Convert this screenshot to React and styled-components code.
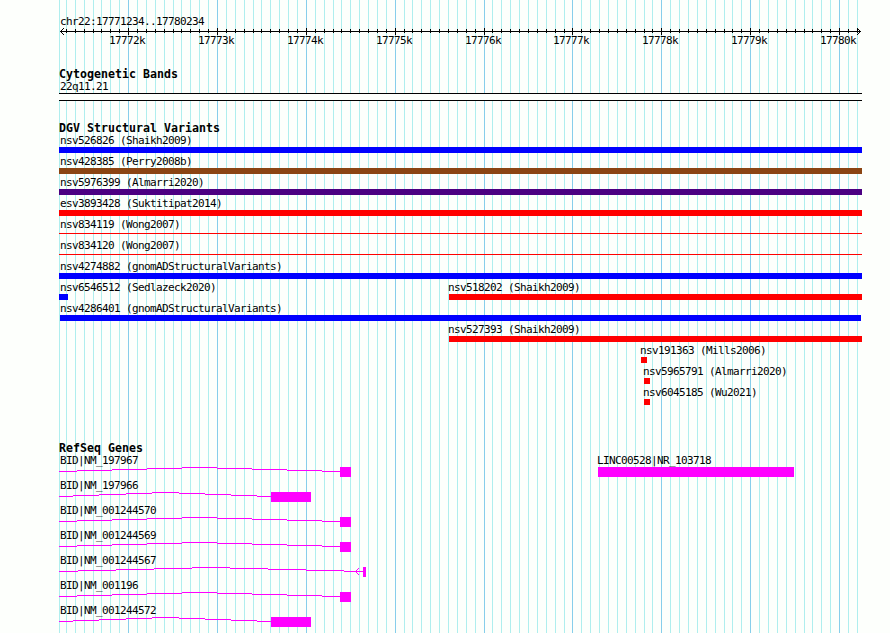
import styled, { createGlobalStyle, css } from "styled-components";

const GlobalStyle = createGlobalStyle`
  body {
    margin: 0;
    background: #fdfffc;
    overflow: hidden;
  }
`;

const Page = styled.main`
  position: relative;
  width: 890px;
  height: 633px;
  overflow: hidden;
  color: #000;
  background: #fdfffc;
`;

const GridLines = styled.svg`
  position: absolute;
  top: 0;
  left: 0;
  shape-rendering: crispEdges;
`;

const Content = styled.div`
  position: relative;
  width: 803px;
  margin-left: 59px;
`;

const labelFont = css`
  font-family: "DejaVu Sans Mono", monospace;
  font-size: 11px;
  letter-spacing: -0.622px;
  white-space: pre;
`;

const Ruler = styled.svg`
  display: block;
  overflow: visible;
  shape-rendering: crispEdges;

  text {
    ${labelFont}
  }
`;

const Track = styled.section`
  height: ${(p) => p.$height}px;
`;

const TrackTitle = styled.h2`
  height: 12px;
  margin: 0;
  font-family: "DejaVu Sans Mono", monospace;
  font-size: 11.6px;
  font-weight: bold;
  letter-spacing: 0.017px;
  line-height: 16px;
  white-space: pre;
`;

const Band = styled.div`
  height: 6px;
  border-top: 1px solid #000;
  border-bottom: 1px solid #000;
  background: #fdfffc;
`;

const Row = styled.div`
  display: grid;
  height: ${(p) => p.$height}px;
`;

const Feature = styled.div`
  grid-area: 1 / 1;
  margin-left: ${(p) => p.$start}px;
`;

const Label = styled.div`
  height: 15px;
  ${labelFont}
  line-height: 17px;
  text-indent: ${(p) => p.$indent}px;
`;

const Bar = styled.div`
  width: ${(p) => p.$width}px;
  height: ${(p) => (p.$thin ? 1 : 6)}px;
  margin-top: ${(p) => (p.$thin ? 2 : 0)}px;
  background: ${(p) => p.$color};
`;

const Transcript = styled.svg`
  display: block;
  fill: #ff00ff;
  shape-rendering: crispEdges;
`;

const START = 17771234;
const LEFT = 60;
const SCALE = 800 / 9001;
const toX = (bp) => Math.round(LEFT + (bp - START) * SCALE);

// labels never start left of the first base, otherwise just before their bar
const labelIndent = (x) => (x < 2 ? 1 - x : -1);

const ticks = [];
for (let bp = 17771300; bp <= 17780200; bp += 100) {
  ticks.push({ bp, x: toX(bp), major: bp % 1000 === 0 });
}

const BLUE = "#0000ff";
const RED = "#ff0000";

const variants = [
  [{ name: "nsv526826 (Shaikh2009)", x: 0, w: 803, color: BLUE }],
  [{ name: "nsv428385 (Perry2008b)", x: 0, w: 803, color: "#8b4513" }],
  [{ name: "nsv5976399 (Almarri2020)", x: 0, w: 803, color: "#4b0082" }],
  [{ name: "esv3893428 (Suktitipat2014)", x: 0, w: 803, color: RED }],
  [{ name: "nsv834119 (Wong2007)", x: 0, w: 803, color: RED, thin: true }],
  [{ name: "nsv834120 (Wong2007)", x: 0, w: 803, color: RED, thin: true }],
  [{ name: "nsv4274882 (gnomADStructuralVariants)", x: 0, w: 803, color: BLUE }],
  [
    { name: "nsv6546512 (Sedlazeck2020)", x: 0, w: 9, color: BLUE },
    { name: "nsv518202 (Shaikh2009)", x: 390, w: 413, color: RED },
  ],
  [{ name: "nsv4286401 (gnomADStructuralVariants)", x: 1, w: 801, color: BLUE }],
  [{ name: "nsv527393 (Shaikh2009)", x: 390, w: 413, color: RED }],
  [{ name: "nsv191363 (Mills2006)", x: 582, w: 6, color: RED }],
  [{ name: "nsv5965791 (Almarri2020)", x: 585, w: 6, color: RED }],
  [{ name: "nsv6045185 (Wu2021)", x: 585, w: 6, color: RED }],
];

// x positions where the intron line moves up or down by one pixel
const LONG = { steps: [0, 18, 53, 88, 123, 158, 193, 228, 263, 281], exon: [281, 11] };
const SHORT = { steps: [0, 14, 40, 67, 93, 120, 146, 172, 198, 212], exon: [212, 40] };
const ARROW = {
  steps: [0, 19, 57, 95, 133, 171, 209, 247, 285, 304],
  exon: [304, 3],
  arrow: 297,
};

const genes = [
  { name: "BID|NM_197967", ...LONG },
  { name: "BID|NM_197966", ...SHORT },
  { name: "BID|NM_001244570", ...LONG },
  { name: "BID|NM_001244569", ...LONG },
  { name: "BID|NM_001244567", ...ARROW },
  { name: "BID|NM_001196", ...LONG },
  { name: "BID|NM_001244572", ...SHORT },
];

function Gene({ name, steps, exon, arrow }) {
  return (
    <Feature $start={0}>
      <Label $indent={1}>{name}</Label>
      <Transcript width="320" height="10">
        {steps.slice(0, -1).map((x, i) => (
          <rect key={x} x={x} y={Math.abs(4 - i)} width={steps[i + 1] - x} height="1" />
        ))}
        {arrow &&
          [1, 2, 3].map((d) => (
            <g key={d}>
              <rect x={arrow + d - 1} y={4 - d} width="1" height="1" />
              <rect x={arrow + d - 1} y={4 + d} width="1" height="1" />
            </g>
          ))}
        <rect x={exon[0]} y="0" width={exon[1]} height="10" />
      </Transcript>
    </Feature>
  );
}

export default function App() {
  return (
    <Page>
      <GlobalStyle />
      <GridLines width="890" height="633">
        <rect x="59" y="0" width="1" height="633" fill="#afeeee" />
        {ticks.map((t) => (
          <rect
            key={t.bp}
            x={t.x}
            y="0"
            width="1"
            height="633"
            fill={t.major ? "#87ceeb" : "#afeeee"}
          />
        ))}
      </GridLines>

      <Content>
        <Ruler width="803" height="66" viewBox="59 0 803 66">
          <text x="60" y="25">chr22:17771234..17780234</text>
          <rect x="60" y="31" width="801" height="1" />
          {ticks.map((t) => (
            <rect
              key={t.bp}
              x={t.x}
              y={t.major ? 28 : 29}
              width="1"
              height={t.major ? 7 : 4}
            />
          ))}
          {[1, 2, 3].map((d) => (
            <g key={d}>
              <rect x={60 + d} y={31 - d} width="1" height="1" />
              <rect x={60 + d} y={31 + d} width="1" height="1" />
              <rect x={860 - d} y={31 - d} width="1" height="1" />
              <rect x={860 - d} y={31 + d} width="1" height="1" />
            </g>
          ))}
          {ticks
            .filter((t) => t.major)
            .map((t) => (
              <text key={t.bp} x={t.x - 19} y="44">
                {t.bp / 1000}k
              </text>
            ))}
        </Ruler>

        <Track $height={54}>
          <TrackTitle>Cytogenetic Bands</TrackTitle>
          <Label $indent={1}>22q11.21</Label>
          <Band />
        </Track>

        <Track $height={320}>
          <TrackTitle>DGV Structural Variants</TrackTitle>
          {variants.map((row) => (
            <Row key={row[0].name} $height={21}>
              {row.map((v) => (
                <Feature key={v.name} $start={v.x}>
                  <Label $indent={labelIndent(v.x)}>{v.name}</Label>
                  <Bar $width={v.w} $color={v.color} $thin={v.thin} />
                </Feature>
              ))}
            </Row>
          ))}
        </Track>

        <Track $height={193}>
          <TrackTitle>RefSeq Genes</TrackTitle>
          {genes.map((g, i) => (
            <Row key={g.name} $height={25}>
              <Gene {...g} />
              {i === 0 && (
                <Feature $start={539}>
                  <Label $indent={-1}>LINC00528|NR_103718</Label>
                  <Transcript width="196" height="10">
                    <rect width="196" height="10" />
                  </Transcript>
                </Feature>
              )}
            </Row>
          ))}
        </Track>
      </Content>
    </Page>
  );
}
